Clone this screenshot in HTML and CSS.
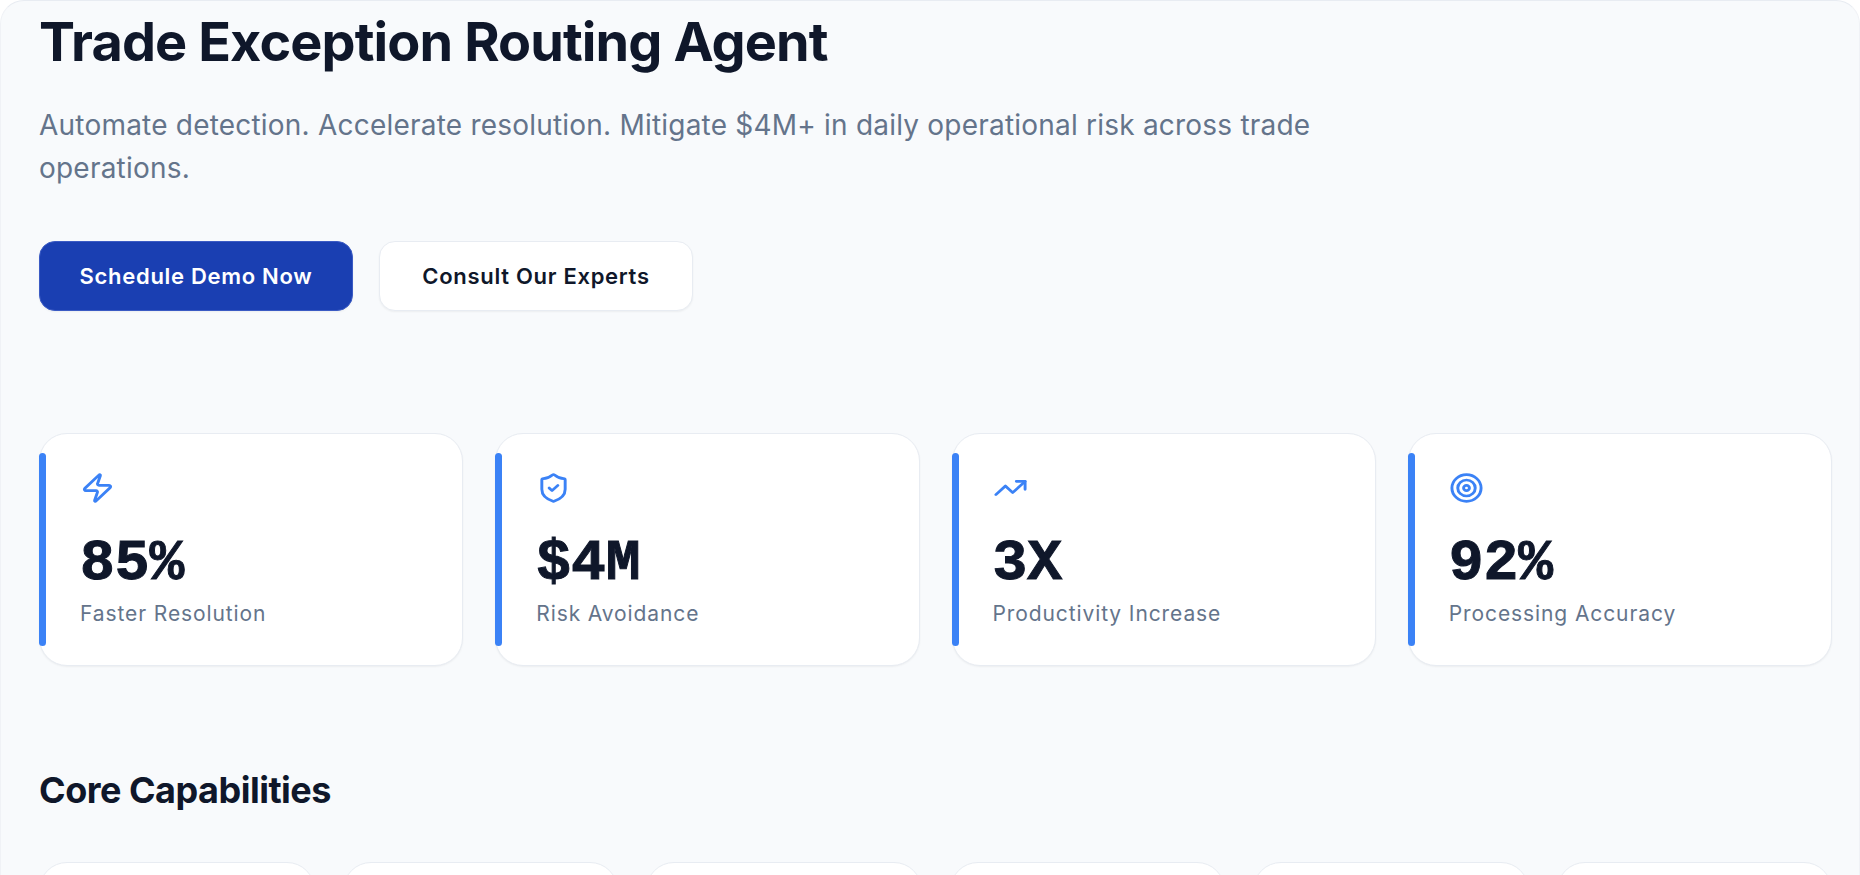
FILE: index.html
```html
<!DOCTYPE html>
<html lang="en">
<head>
    <meta charset="UTF-8">
    <meta name="viewport" content="width=device-width, initial-scale=1.0">
    <title>Trade Exception Routing Agent</title>
    <link rel="stylesheet" href="styles.css">
</head>
<body>
    <div class="page">
        <div class="hero">
            <h1>Trade Exception Routing Agent</h1>
            <p>Automate detection. Accelerate resolution. Mitigate $4M+ in daily operational risk across trade operations.</p>
            <div class="hero-actions">
                <a class="btn btn-primary" href="#">Schedule Demo Now</a>
                <a class="btn btn-secondary" href="#">Consult Our Experts</a>
            </div>
        </div>

        <div class="stats">
            <div class="stat-card">
                <svg class="stat-icon" viewBox="0 0 24 24" preserveAspectRatio="none"><path d="M4 14a1 1 0 0 1-.78-1.63l9.9-10.2a.5.5 0 0 1 .86.46l-1.92 6.02A1 1 0 0 0 13 10h7a1 1 0 0 1 .78 1.63l-9.9 10.2a.5.5 0 0 1-.86-.46l1.92-6.02A1 1 0 0 0 11 14z"/></svg>
                <div class="stat-value">85%</div>
                <div class="stat-label">Faster Resolution</div>
            </div>
            <div class="stat-card">
                <svg class="stat-icon" viewBox="0 0 24 24" preserveAspectRatio="none"><path d="M20 13c0 5-3.5 7.5-7.66 8.95a1 1 0 0 1-.67-.01C7.5 20.5 4 18 4 13V6a1 1 0 0 1 1-1c2 0 4.5-1.2 6.24-2.72a1.17 1.17 0 0 1 1.52 0C14.51 3.81 17 5 19 5a1 1 0 0 1 1 1z"/><path d="m9 12 2 2 4-4"/></svg>
                <div class="stat-value">$4M</div>
                <div class="stat-label">Risk Avoidance</div>
            </div>
            <div class="stat-card">
                <svg class="stat-icon" viewBox="0 0 24 24" preserveAspectRatio="none"><path d="M22 7 13.5 15.5 8.5 10.5 2 17"/><path d="M16 7h6v6"/></svg>
                <div class="stat-value">3X</div>
                <div class="stat-label">Productivity Increase</div>
            </div>
            <div class="stat-card">
                <svg class="stat-icon" viewBox="0 0 24 24" preserveAspectRatio="none"><circle cx="12" cy="12" r="10"/><circle cx="12" cy="12" r="6"/><circle cx="12" cy="12" r="2"/></svg>
                <div class="stat-value">92%</div>
                <div class="stat-label">Processing Accuracy</div>
            </div>
        </div>

        <h2>Core Capabilities</h2>
        <div class="capabilities">
            <div class="capability-card"></div>
            <div class="capability-card"></div>
            <div class="capability-card"></div>
            <div class="capability-card"></div>
            <div class="capability-card"></div>
            <div class="capability-card"></div>
        </div>
    </div>
</body>
</html>
```

FILE: styles.css
```css
:root {
    --ink: #0f172a;
    --muted: #64748b;
    --accent: #3b82f6;
    --primary: #1a3fb2;
    --line: #e8ecf2;
    --background: #f8fafc;
}

* {
    margin: 0;
    padding: 0;
    box-sizing: border-box;
}

html, body {
    height: 100%;
    overflow: hidden;
}

body {
    font-family: 'Inter', sans-serif;
    background: white;
    color: var(--ink);
}

.page {
    height: 875px;
    overflow: hidden;
    background: var(--background);
    border: 1px solid #f0f2f6;
    border-top-color: var(--line);
    border-bottom: none;
    border-radius: 24px 24px 0 0;
    padding: 10px 27px 0 38px;
}

.hero h1 {
    font-size: 54px;
    line-height: 62px;
    font-weight: 700;
    letter-spacing: -0.9px;
}

.hero p {
    max-width: 1300px;
    margin-top: 31px;
    font-size: 28px;
    line-height: 43px;
    letter-spacing: 0.21px;
    color: var(--muted);
}

.hero-actions {
    display: flex;
    gap: 26px;
    margin-top: 51px;
}

.btn {
    display: flex;
    align-items: center;
    justify-content: center;
    width: 314px;
    height: 70px;
    border-radius: 16px;
    font-size: 22px;
    font-weight: 600;
    letter-spacing: 0.7px;
    text-decoration: none;
    box-shadow: 0 1px 2px rgba(0,0,0,0.05);
}

.btn-primary {
    background: var(--primary);
    border: 1px solid #3b5bc4;
    color: white;
}

.btn-secondary {
    background: white;
    border: 1px solid var(--line);
    color: var(--ink);
}

.stats {
    display: grid;
    grid-template-columns: repeat(4, 1fr);
    gap: 32px;
    margin-top: 122px;
}

.stat-card {
    position: relative;
    height: 233px;
    padding: 38px 40px;
    background: white;
    border: 1px solid var(--line);
    border-radius: 28px;
    box-shadow: 0 1px 2px rgba(0,0,0,0.05);
}

/* accent bar on the left edge */
.stat-card::before {
    content: "";
    position: absolute;
    left: -1px;
    top: 19px;
    bottom: 19px;
    width: 7px;
    border-radius: 4px;
    background: var(--accent);
}

.stat-icon {
    display: block;
    width: 35px;
    height: 32px;
    fill: none;
    stroke: var(--accent);
    stroke-width: 2;
    stroke-linecap: round;
    stroke-linejoin: round;
}

.stat-value {
    margin-top: 26px;
    font-family: 'Liberation Mono', monospace;
    font-size: 58px;
    line-height: 68px;
    font-weight: 700;
    -webkit-text-stroke: 1px var(--ink);
}

.stat-label {
    margin-top: 2px;
    font-size: 21px;
    line-height: 28px;
    letter-spacing: 0.9px;
    color: var(--muted);
}

h2 {
    margin-top: 102px;
    font-size: 36px;
    line-height: 44px;
    font-weight: 700;
    letter-spacing: -0.5px;
}

.capabilities {
    display: grid;
    grid-template-columns: repeat(6, 1fr);
    gap: 28px;
    margin-top: 50px;
}

.capability-card {
    height: 200px;
    background: white;
    border: 1px solid var(--line);
    border-radius: 28px;
}
```
